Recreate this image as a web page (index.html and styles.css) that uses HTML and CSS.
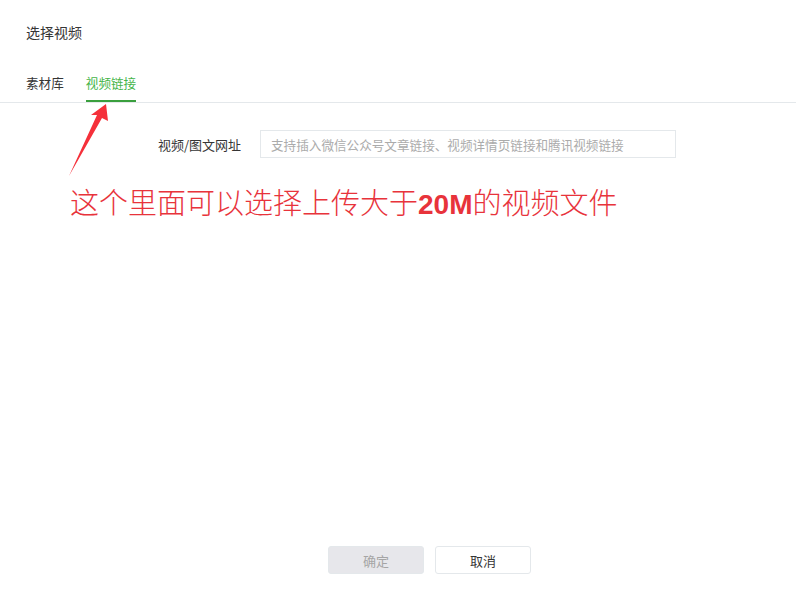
FILE: index.html
```html
<!DOCTYPE html>
<html lang="zh-CN">

<head>
    <meta charset="UTF-8">
    <meta name="viewport" content="width=device-width, initial-scale=1.0">
    <title>选择视频</title>
    <link rel="stylesheet" href="styles.css">
</head>

<body>
    <div class="dialog">
        <div class="dialog-title">选择视频</div>

        <div class="tabs">
            <a class="tab">素材库</a>
            <a class="tab active">视频链接</a>
        </div>

        <div class="form-row">
            <label class="form-label" for="videoUrl">视频/图文网址</label>
            <input class="form-input" type="text" id="videoUrl" placeholder="支持插入微信公众号文章链接、视频详情页链接和腾讯视频链接">
        </div>

        <div class="note">这个里面可以选择上传大于<span class="note-strong">20M</span>的视频文件</div>

        <div class="dialog-footer">
            <button class="btn btn-disabled" disabled>确定</button>
            <button class="btn">取消</button>
        </div>

        <!-- annotation arrow pointing at the tab -->
        <svg class="arrow" width="796" height="592" viewBox="0 0 796 592">
            <polygon points="106,104 108,121 102,118 69,176 97,115 91,115" fill="#f5303a" />
        </svg>
    </div>
</body>

</html>
```

FILE: styles.css
```css
body {
    margin: 0;
    background-color: #fff;
    font-family: "Noto Sans CJK SC", "Liberation Sans", sans-serif;
    color: #353535;
}

.dialog {
    position: relative;
    height: 592px;
    display: flex;
    flex-direction: column;
}

.dialog-title {
    padding: 0 26px;
    height: 64px;
    line-height: 64px;
    font-size: 14px;
}

.tabs {
    display: flex;
    padding: 0 26px;
    border-bottom: 1px solid #e4e8eb;
}

.tab {
    height: 36px;
    line-height: 38px;
    font-size: 12.6px;
    margin-right: 22px;
    border-bottom: 2px solid transparent;
    cursor: pointer;
}

.tab.active {
    color: #44b549;
    border-bottom-color: #3a9f3e;
}

.form-row {
    display: flex;
    align-items: center;
    margin-top: 27px;
}

.form-label {
    width: 241px;
    text-align: right;
    margin-right: 19px;
    font-size: 13px;
}

.form-input {
    box-sizing: border-box;
    width: 416px;
    height: 28px;
    padding: 0 10px;
    border: 1px solid #e4e8eb;
    font-family: inherit;
    font-size: 12.6px;
    color: #353535;
    outline: none;
}

.form-input::placeholder {
    color: #ababab;
}

.note {
    margin: 19px 0 0 70px;
    font-size: 29px;
    line-height: 48px;
    color: #e8333b;
    font-weight: 300;
}

.note-strong {
    font-family: "Liberation Sans", sans-serif;
    font-weight: bold;
    font-size: 28px;
}

.dialog-footer {
    margin-top: auto;
    padding: 0 0 18px 328px;
    display: flex;
    gap: 11px;
}

.btn {
    width: 96px;
    height: 28px;
    border: 1px solid #e4e8eb;
    border-radius: 3px;
    background-color: #fff;
    color: #353535;
    font-family: inherit;
    font-size: 13px;
    cursor: pointer;
}

.btn-disabled {
    background-color: #e7e7eb;
    color: #a5a5a5;
    cursor: default;
}

.arrow {
    position: absolute;
    top: 0;
    left: 0;
    pointer-events: none;
}
```
